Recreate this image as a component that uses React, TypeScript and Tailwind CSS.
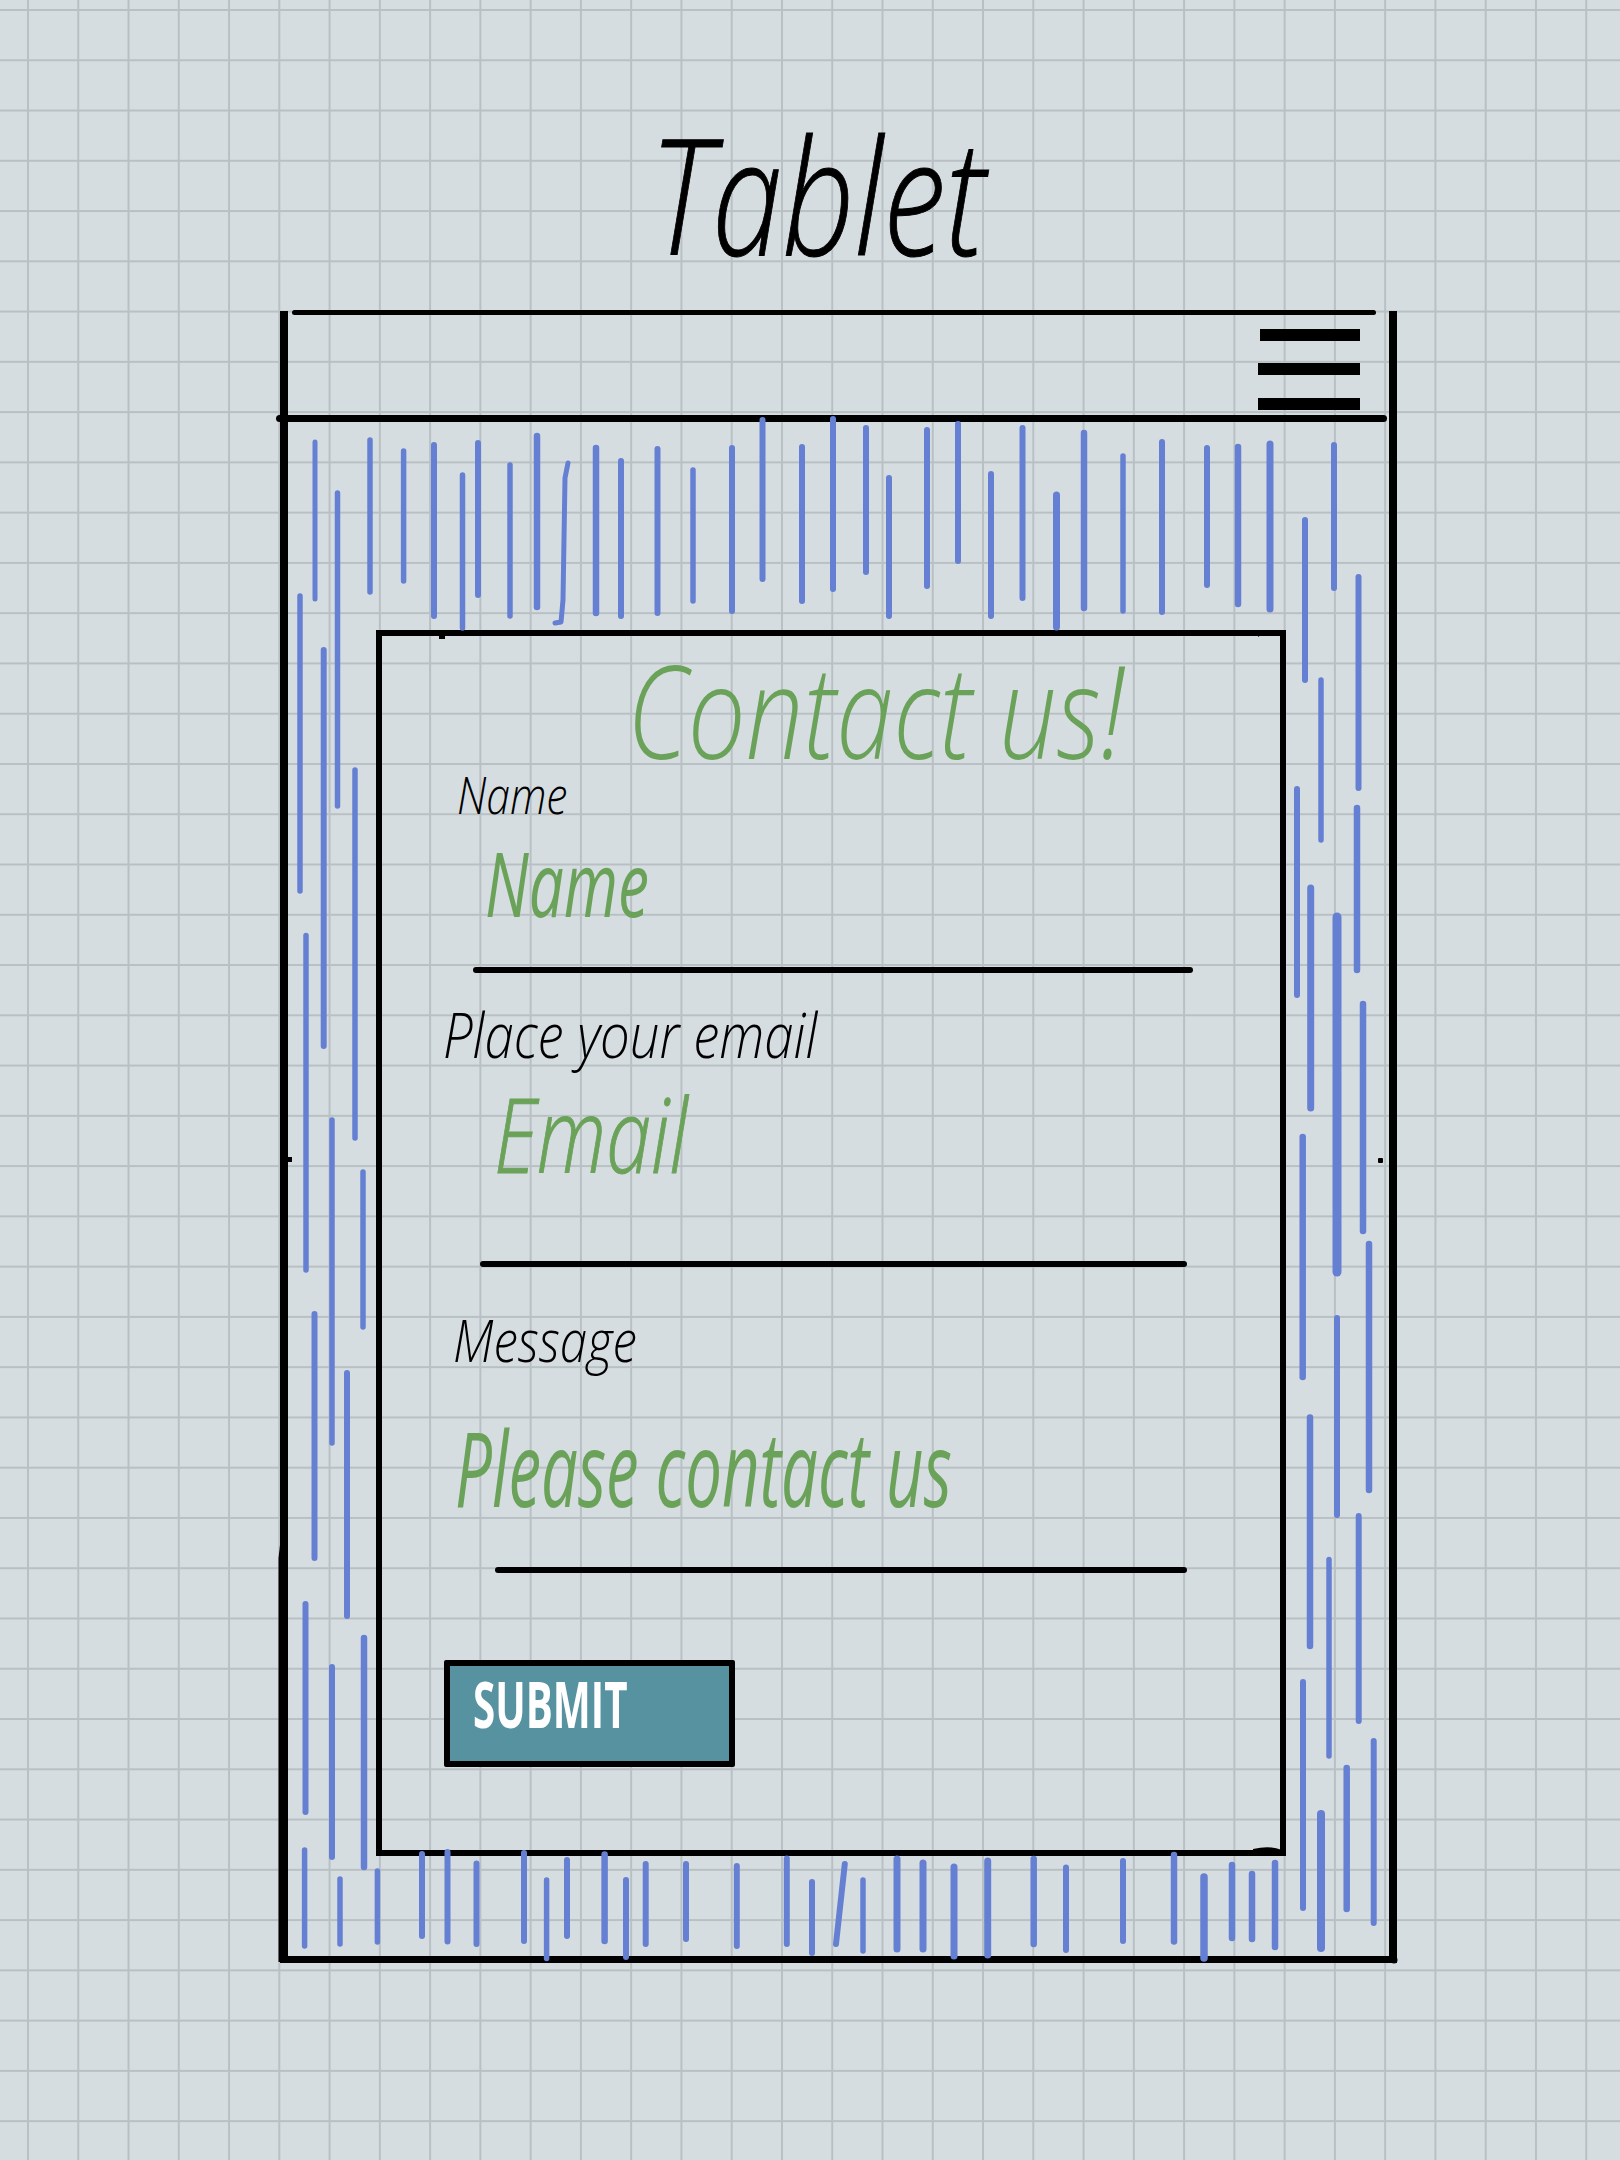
const INK = "#6580d2";

// hatch strokes drawn around the card: [x, y1, y2, width]
const hatches: [number, number, number, number][] = [
  // top band
  [315, 442, 599, 5], [370, 440, 592, 5.5], [403.6, 451, 581, 5.5], [434, 445, 616, 6],
  [462.5, 475, 628, 5.5], [478, 443, 595, 6], [510, 465, 616, 5.5], [537, 436, 607, 6.5],
  [596, 448, 613, 6.5], [621, 461, 616, 6], [657.5, 449, 613, 6], [693, 470, 601, 5.5],
  [732, 448, 611, 6], [762.5, 420, 579, 6], [802, 447, 601, 6], [833, 419, 589, 6],
  [866, 428, 572, 6], [889, 478, 616, 6], [927, 430, 586, 6], [958, 424, 561, 6],
  [991, 474, 616, 6], [1022.5, 428, 598, 6], [1056.5, 495, 627, 7], [1084, 433, 608, 6.5],
  [1123, 456, 611, 5.5], [1162, 442, 612, 6], [1207, 448, 585, 6], [1238, 447, 604, 6.5],
  [1270, 444, 609, 7],
  // left band
  [300, 596, 891, 5.5], [323.7, 650, 1046, 6], [337.5, 493, 806, 5.5], [355, 770, 1138, 5.5],
  [306, 935.5, 1270, 5.5], [332, 1120, 1443, 5.5], [363, 1172, 1327, 5.5], [314.5, 1314, 1558, 6],
  [347, 1373, 1616, 6], [305.5, 1604, 1812, 6], [332, 1667, 1857, 6], [364, 1638, 1867, 6.5],
  [304.6, 1850, 1946, 5.5], [340, 1879, 1944, 5.5], [377.4, 1871, 1942, 5.5],
  // right band
  [1305, 520, 680, 6], [1334, 445, 588, 6], [1358.5, 577, 788, 6], [1321, 680, 840, 5.5],
  [1297, 789, 995, 6], [1357, 808, 970, 6.5], [1310.7, 888, 1108, 7], [1337, 917, 1272, 9],
  [1363, 1004, 1231, 6.5], [1302.7, 1137, 1377, 6.5], [1369, 1244, 1490, 6.5], [1337, 1318, 1515, 6],
  [1310, 1417.5, 1646, 6.5], [1358.7, 1516, 1721, 6], [1329, 1559.5, 1756, 5.5], [1303, 1682, 1908, 6],
  [1373.7, 1741, 1923, 6], [1346.7, 1768, 1909, 6.5], [1321, 1814, 1948, 8],
  // bottom band
  [422, 1854, 1936, 6], [447.5, 1852, 1941.6, 6], [476.5, 1863.5, 1944, 6], [524, 1853, 1941, 6],
  [546.6, 1880, 1958.6, 5.5], [567, 1860, 1936, 6], [604.6, 1854.5, 1941, 6.5], [626, 1880, 1957, 6],
  [645.7, 1864, 1944, 6], [686, 1864, 1939, 6], [736.8, 1866, 1946, 6], [786.8, 1858.6, 1944, 6],
  [812, 1882, 1953, 6], [863, 1880, 1951, 5.5], [897, 1859, 1949, 7], [923, 1863, 1949, 7],
  [954, 1867, 1956, 7], [987.7, 1861, 1955, 7], [1033.7, 1859, 1944, 6.5], [1066, 1867.5, 1950, 6],
  [1123, 1861, 1941, 6], [1174, 1855, 1941.6, 6.5], [1204, 1877, 1958, 7.5], [1232, 1865, 1938, 6.5],
  [1252, 1874, 1939, 6.5], [1275, 1863, 1947, 6.5],
];

function HatchLayer() {
  return (
    <svg className="absolute left-0 top-0 pointer-events-none" width="1620" height="2160" fill="none">
      {hatches.map(([x, y1, y2, w]) => (
        <line key={`${x}-${y1}`} x1={x} x2={x} y1={y1} y2={y2} stroke={INK} strokeWidth={w} strokeLinecap="round" />
      ))}
      <path d="M568 463 L565 478 L563 600 L561 622 L555 623" stroke={INK} strokeWidth="5" strokeLinecap="round" strokeLinejoin="round" />
      <line x1="844.8" y1="1864" x2="836" y2="1944" stroke={INK} strokeWidth="6" strokeLinecap="round" />
      {/* stray pen marks on the frame */}
      <path d="M280 1545 L278.5 1558 L278.5 1962 L280 1962 Z" fill="#000" />
      <rect x="288" y="1157" width="4" height="5" fill="#000" />
      <rect x="1378" y="1158" width="5" height="5" rx="1" fill="#000" />
      <rect x="439" y="635" width="6" height="4" fill="#000" />
      <path d="M1258 630 L1282 630 L1282 636 L1262 634 L1258 637 Z" fill="#000" />
      <path d="M1253 1849 Q1270 1845 1282 1850 L1282 1855 L1253 1855 Z" fill="#000" />
      <circle cx="1394" cy="1960" r="3.5" fill="#000" />
    </svg>
  );
}

function Rule({ className }: { className: string }) {
  return <div className={`h-[6px] rounded-full bg-black ${className}`} />;
}

export default function App() {
  return (
    <div
      className="relative flex h-[2160px] w-[1620px] flex-col overflow-hidden bg-[#d6dde1] [background-image:linear-gradient(#b9c0c4_2px,transparent_2px),linear-gradient(90deg,#b9c0c4_2px,transparent_2px)] [background-position:27px_9px] [background-size:50.27px_50.27px] font-['Open_Sans',sans-serif] italic"
    >
      {/* 見出し */}
      <div className="h-[311px] pl-[650px] pt-[113px]">
        <div className="w-fit origin-left scale-x-[0.79] whitespace-nowrap text-[160px] font-light leading-none text-black [-webkit-text-stroke:1px_black]">
          Tablet
        </div>
      </div>

      {/* タブレットの枠 */}
      <div className="ml-[280px] flex h-[1652px] w-[1117px] flex-col border-x-8 border-b-[7px] border-black">
        <div className="-mt-[1.5px] ml-[4px] mr-[13px] h-[5px] rounded-full bg-black" />
        <div className="flex h-[100px] flex-col items-end justify-between pb-[5px] pr-[29px] pt-[14px]">
          <div className="h-[12px] w-[100px] bg-black" />
          <div className="h-[12px] w-[102px] bg-black" />
          <div className="h-[12px] w-[102px] bg-black" />
        </div>
        <div className="-ml-[12px] mr-[2px] h-[7px] rounded-full bg-black" />

        {/* カード */}
        <div className="ml-[88px] mt-[208px] flex h-[1226px] w-[910px] flex-col border-x-[6.5px] border-b-[6px] border-t-[6.5px] border-black">
          <div className="ml-[245px] mt-[14px] w-fit origin-left scale-x-[0.79] whitespace-nowrap text-[130px] font-light leading-[0.9] text-[#6ba259]">
            Contact us!
          </div>

          <div className="ml-[75px] mt-[1.5px] w-fit origin-left scale-x-[0.82] whitespace-nowrap text-[52px] font-light leading-none text-black">
            Name
          </div>
          <div className="ml-[103px] mt-[17px] w-fit origin-left scale-x-[0.69] whitespace-nowrap text-[90px] font-normal leading-none text-[#6ba259]">
            Name
          </div>
          <Rule className="ml-[91px] mt-[40px] w-[720px]" />

          <div className="ml-[61px] mt-[30px] w-fit origin-left scale-x-[0.85] whitespace-nowrap text-[62px] font-light leading-none text-black">
            Place your email
          </div>
          <div className="ml-[112px] mt-[16px] w-fit origin-left scale-x-[0.78] whitespace-nowrap text-[104px] font-light leading-none text-[#6ba259] [-webkit-text-stroke:1px_#6ba259]">
            Email
          </div>
          <Rule className="ml-[98px] mt-[76px] w-[707px]" />

          <div className="ml-[71px] mt-[44px] w-fit origin-left scale-x-[0.85] whitespace-nowrap text-[58px] font-light leading-none text-black">
            Message
          </div>
          <div className="ml-[73px] mt-[44.5px] w-fit origin-left scale-x-[0.622] whitespace-nowrap text-[105px] font-normal leading-none text-[#6ba259]">
            Please contact us
          </div>
          <Rule className="ml-[113px] mt-[48px] w-[692px]" />

          <div className="ml-[62px] mt-[87px] flex h-[107px] w-[291px] items-start rounded-[2px] border-[6px] border-black bg-[#56929f] pl-[23px] pt-[6px]">
            <span className="origin-left scale-x-[0.63] whitespace-nowrap text-[64px] font-bold not-italic leading-none text-white">
              SUBMIT
            </span>
          </div>
        </div>
      </div>

      <HatchLayer />
    </div>
  );
}
